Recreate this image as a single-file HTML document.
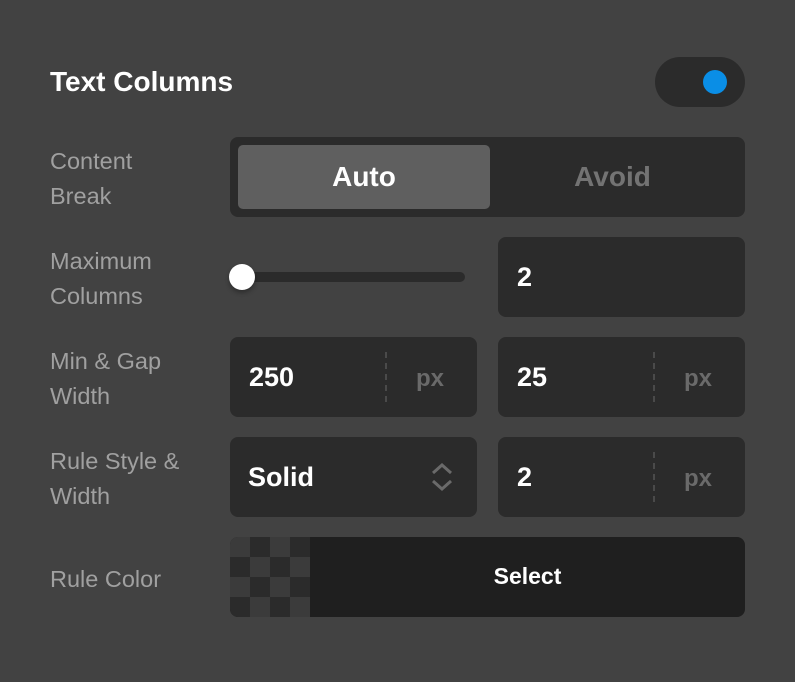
<!DOCTYPE html><html><head><style>
body{margin:0;width:795px;height:682px;background:#424242;font-family:"Liberation Sans","DejaVu Sans",sans-serif;position:relative;overflow:hidden}
.a{position:absolute}
.t{left:50px;top:66px;font-size:28px;font-weight:bold;color:#fff}
.l{left:50px;font-size:23.5px;color:#a0a0a0;line-height:35px}
.box{background:#2b2b2b;border-radius:8px}
.v{font-size:27px;font-weight:bold;color:#fff}
.px{font-size:24px;font-weight:bold;color:#6a6a6a}
.dash{width:0;border-left:2px dashed #4a4a4a;height:50px}
</style></head><body>
<div class="a t">Text Columns</div>
<div class="a box" style="left:655px;top:57px;width:90px;height:50px;border-radius:25px"></div>
<div class="a" style="left:703px;top:70px;width:24px;height:24px;border-radius:50%;background:#0a8ee6"></div>

<div class="a l" style="top:144px">Content<br>Break</div>
<div class="a box" style="left:230px;top:137px;width:515px;height:80px"></div>
<div class="a" style="left:238px;top:145px;width:252px;height:64px;background:#5f5f5f;border-radius:5px"></div>
<div class="a v" style="left:238px;top:161px;width:252px;text-align:center;font-size:28px">Auto</div>
<div class="a v" style="left:490px;top:161px;width:245px;text-align:center;color:#737373;font-size:28px">Avoid</div>

<div class="a l" style="top:244px">Maximum<br>Columns</div>
<div class="a" style="left:230px;top:272px;width:235px;height:10px;background:#2b2b2b;border-radius:5px"></div>
<div class="a" style="left:229px;top:264px;width:26px;height:26px;border-radius:50%;background:#fff;box-shadow:0 3px 5px rgba(0,0,0,.3)"></div>
<div class="a box" style="left:498px;top:237px;width:247px;height:80px"></div>
<div class="a v" style="left:517px;top:262px">2</div>

<div class="a l" style="top:344px">Min &amp; Gap<br>Width</div>
<div class="a box" style="left:230px;top:337px;width:247px;height:80px"></div>
<div class="a v" style="left:249px;top:362px">250</div>
<div class="a dash" style="left:385px;top:352px"></div>
<div class="a px" style="left:416px;top:365px">px</div>
<div class="a box" style="left:498px;top:337px;width:247px;height:80px"></div>
<div class="a v" style="left:517px;top:362px">25</div>
<div class="a dash" style="left:653px;top:352px"></div>
<div class="a px" style="left:684px;top:365px">px</div>

<div class="a l" style="top:444px">Rule Style &amp;<br>Width</div>
<div class="a box" style="left:230px;top:437px;width:247px;height:80px"></div>
<div class="a v" style="left:248px;top:462px">Solid</div>
<svg class="a" style="left:430px;top:463px" width="24" height="30"><path d="M3 10 L12 2 L21 10 M3 18 L12 26 L21 18" fill="none" stroke="#6a6a6a" stroke-width="3"/></svg>
<div class="a box" style="left:498px;top:437px;width:247px;height:80px"></div>
<div class="a v" style="left:517px;top:462px">2</div>
<div class="a dash" style="left:653px;top:452px"></div>
<div class="a px" style="left:684px;top:465px">px</div>

<div class="a l" style="top:562px">Rule Color</div>
<div class="a" style="left:230px;top:537px;width:515px;height:80px;border-radius:8px;overflow:hidden;background:#1f1f1f">
<div style="width:80px;height:80px;background-color:#2b2b2b;background-image:linear-gradient(45deg,#3b3b3b 25%,transparent 25%,transparent 75%,#3b3b3b 75%),linear-gradient(45deg,#3b3b3b 25%,transparent 25%,transparent 75%,#3b3b3b 75%);background-size:40px 40px;background-position:20px 0,0 20px"></div>
</div>
<div class="a" style="left:310px;top:563px;width:435px;text-align:center;font-size:23px;font-weight:bold;color:#fff">Select</div>
</body></html>
